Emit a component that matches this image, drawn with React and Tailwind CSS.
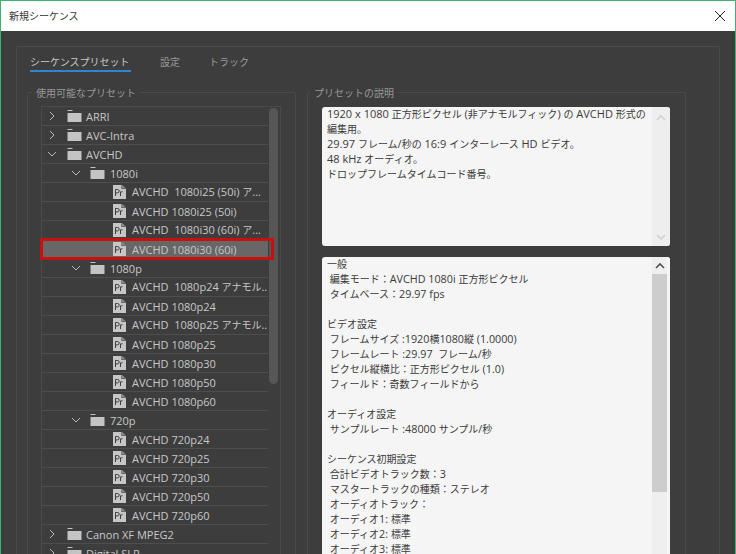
import React from "react";

const font = { fontFamily: '"Open Sans","Noto Sans CJK JP",sans-serif' };

function T({ children }) {
  const parts = String(children).split(/([^\x00-\x7f]+)/);
  return (
    <>
      {parts.map((p, i) =>
        i % 2 === 1 ? <span key={i} className="text-[10px]">{p}</span> : <span key={i}>{p}</span>
      )}
    </>
  );
}

function Chevron({ open }) {
  return (
    <svg width="10" height="10" viewBox="0 0 10 10" fill="none" stroke="#b9b9b9" strokeWidth="1" className="shrink-0">
      {open ? <path d="M1 3l4 4 4-4" /> : <path d="M3 1l4 4-4 4" />}
    </svg>
  );
}

function Folder() {
  return (
    <svg width="15" height="13" viewBox="0 0 15 13" className="shrink-0">
      <rect x="0.5" y="0" width="5" height="1" fill="#c4c4c4" />
      <rect x="0.5" y="3" width="14" height="9" fill="#c4c4c4" />
    </svg>
  );
}

function PrFile() {
  return (
    <svg width="13" height="14" viewBox="0 0 13 14" className="shrink-0">
      <path d="M0 0h8.5L13 4v10H0z" fill="#c6c6c6" />
      <path d="M8.5 0v4H13z" fill="#3d3d3d" />
      <path d="M9 0l4 3.6H9z" fill="#8a8a8a" />
      <path d="M2.5 11V4.5h2a1.6 1.6 0 010 3.4h-2M7.5 11V6.5M7.5 8c.4-1 1.2-1.4 2-1.4" fill="none" stroke="#3f3f3f" strokeWidth="1" />
    </svg>
  );
}

const rows = [
  [0, "ARRI", false],
  [0, "AVC-Intra", false],
  [0, "AVCHD", true],
  [1, "1080i", true],
  [2, "AVCHD  1080i25 (50i) ア..."],
  [2, "AVCHD 1080i25 (50i)"],
  [2, "AVCHD  1080i30 (60i) ア..."],
  [2, "AVCHD 1080i30 (60i)", undefined, true],
  [1, "1080p", true],
  [2, "AVCHD  1080p24 アナモル.."],
  [2, "AVCHD 1080p24"],
  [2, "AVCHD  1080p25 アナモル.."],
  [2, "AVCHD 1080p25"],
  [2, "AVCHD 1080p30"],
  [2, "AVCHD 1080p50"],
  [2, "AVCHD 1080p60"],
  [1, "720p", true],
  [2, "AVCHD 720p24"],
  [2, "AVCHD 720p25"],
  [2, "AVCHD 720p30"],
  [2, "AVCHD 720p50"],
  [2, "AVCHD 720p60"],
  [0, "Canon XF MPEG2", false],
  [0, "Digital SLR", false],
];

function Row({ level, label, open, selected }) {
  return (
    <div className={`relative h-[19px] shrink-0 flex items-center border-b border-[#4e4e4e] text-[11px] ${selected ? "bg-[#676767]" : ""}`}>
      {level === 0 && (
        <div className="flex items-center pl-[5px]">
          <Chevron open={open} />
          <div className="ml-[10px]"><Folder /></div>
          <span className="ml-[4px] text-[#c8c8c8] whitespace-pre">{label}</span>
        </div>
      )}
      {level === 1 && (
        <div className="flex items-center pl-[29px]">
          <Chevron open={open} />
          <div className="ml-[9px]"><Folder /></div>
          <span className="ml-[5px] text-[#c8c8c8] whitespace-pre">{label}</span>
        </div>
      )}
      {level === 2 && (
        <div className="flex items-center pl-[71px]">
          <PrFile />
          <span className="ml-[6px] text-[#c8c8c8] whitespace-pre"><T>{label}</T></span>
        </div>
      )}
      {selected && (
        <div className="absolute -left-[2px] -right-[6px] -top-[2px] -bottom-[2px] border-[3px] border-[#c8100f]" />
      )}
    </div>
  );
}

function ScrollArrow({ up, color }) {
  return (
    <svg width="10" height="7" viewBox="0 0 10 7" fill="none" stroke={color} strokeWidth="1.6">
      {up ? <path d="M1 6l4-4 4 4" /> : <path d="M1 1l4 4 4-4" />}
    </svg>
  );
}

const desc = [
  "1920 x 1080 正方形ピクセル (非アナモルフィック) の AVCHD 形式の",
  "編集用。",
  "29.97 フレーム/秒の 16:9 インターレース HD ビデオ。",
  "48 kHz オーディオ。",
  "ドロップフレームタイムコード番号。",
];

const info = [
  "一般",
  " 編集モード：AVCHD 1080i 正方形ピクセル",
  " タイムベース：29.97 fps",
  "",
  "ビデオ設定",
  " フレームサイズ :1920横1080縦 (1.0000)",
  " フレームレート :29.97  フレーム/秒",
  " ピクセル縦横比：正方形ピクセル (1.0)",
  " フィールド：奇数フィールドから",
  "",
  "オーディオ設定",
  " サンプルレート :48000 サンプル/秒",
  "",
  "シーケンス初期設定",
  " 合計ビデオトラック数：3",
  " マスタートラックの種類：ステレオ",
  " オーディオトラック：",
  " オーディオ1: 標準",
  " オーディオ2: 標準",
  " オーディオ3: 標準",
];

export default function App() {
  return (
    <div style={font} className="w-[736px] h-[554px] overflow-hidden flex flex-col border-x border-t border-[#3cb371] bg-[#3d3d3d] text-[10.5px] leading-[15px]">
      <div className="h-[30px] shrink-0 bg-white flex items-center justify-between pl-[8px] pr-[9px]">
        <span className="text-[#333] text-[10px]">新規シーケンス</span>
        <svg width="12" height="12" viewBox="0 0 12 12" fill="none" stroke="#222" strokeWidth="1">
          <path d="M1 1l10 10M11 1L1 11" />
        </svg>
      </div>

      <div className="flex-1 min-h-0 pt-[15px] pl-[15px] pr-[15px]">
        <div className="h-[600px] border border-[#4a4a4a] rounded-[2px] pt-[8px] px-[10px]">
          <div className="flex pl-[3px] h-[18px] items-start gap-[29px] text-[10px]">
            <span className="text-[#c8c8c8] h-[17px] border-b-2 border-[#2f84d3] w-[101px] whitespace-nowrap">シーケンスプリセット</span>
            <span className="text-[#9a9a9a]">設定</span>
            <span className="text-[#9a9a9a]">トラック</span>
          </div>

          <div className="flex gap-[11px] mt-[12px] items-start">
            <fieldset className="w-[269px] h-[520px] border border-[#4a4a4a] rounded-[2px] pl-[13px] pr-[14px] shrink-0 m-0">
              <legend className="-ml-[9px] px-[4px] pt-[2px] text-[#999] text-[10px] leading-[13px]">使用可能なプリセット</legend>
              <div className="border border-[#4a4a4a] mt-[6px] flex h-[500px] border-b-0">
                <div className="w-[226px] shrink-0 flex flex-col">
                  {rows.map((r, i) => (
                    <Row key={i} level={r[0]} label={r[1]} open={r[2]} selected={r[3]} />
                  ))}
                </div>
                <div className="flex-1 pl-[1px] pt-[1px]">
                  <div className="w-[9px] h-[276px] rounded-[5px] bg-[#565656]" />
                </div>
              </div>
            </fieldset>

            <fieldset className="w-[379px] h-[520px] border border-[#4a4a4a] rounded-[2px] pl-[14px] m-0 shrink-0">
              <legend className="-ml-[12px] px-[4px] pt-[2px] text-[#999] text-[10px] leading-[13px]">プリセットの説明</legend>
              <div className="mt-[7px] w-[348px] h-[139px] rounded-[3px] bg-[#f5f5f5] flex overflow-hidden">
                <div className="flex-1 pl-[5px] -mt-[1px] text-[#3a3a3a] text-[11px]">
                  {desc.map((l, i) => <div key={i} className="whitespace-pre h-[15px]"><T>{l}</T></div>)}
                </div>
                <div className="w-[18px] bg-[#eeeeee] flex flex-col items-center justify-between pt-[7px] pb-[5px]">
                  <ScrollArrow up color="#d0d0d0" />
                  <ScrollArrow color="#d0d0d0" />
                </div>
              </div>
              <div className="mt-[11px] w-[348px] h-[320px] rounded-[3px] bg-[#f5f5f5] flex overflow-hidden">
                <div className="flex-1 pl-[5px] text-[#3a3a3a] text-[10.75px]">
                  {info.map((l, i) => <div key={i} className="whitespace-pre h-[15px]"><T>{l}</T></div>)}
                </div>
                <div className="w-[18px] pr-[3px] bg-[#f5f5f5] flex flex-col">
                  <div className="bg-[#efefef] flex-1 flex flex-col items-center">
                    <div className="h-[17px] flex items-center"><ScrollArrow up color="#505050" /></div>
                    <div className="w-full h-[218px] bg-[#cdcdcd]" />
                  </div>
                </div>
              </div>
            </fieldset>
          </div>
        </div>
      </div>
    </div>
  );
}
